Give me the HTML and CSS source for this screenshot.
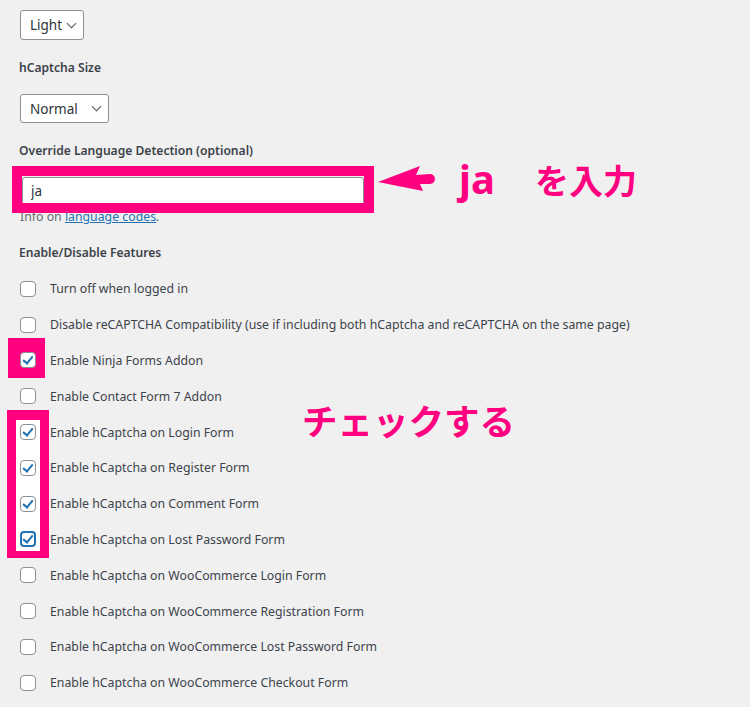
FILE: index.html
```html
<!DOCTYPE html>
<html lang="ja">

<head>
    <meta charset="UTF-8">
    <title>hCaptcha Settings</title>
    <link rel="stylesheet" href="styles.css">
</head>

<body>
    <div class="page">
        <!-- Theme -->
        <div class="field">
            <div class="select select-light">Light <span class="chev"></span></div>
        </div>

        <h3 class="label">hCaptcha Size</h3>
        <div class="field">
            <div class="select select-normal">Normal <span class="chev"></span></div>
        </div>

        <h3 class="label">Override Language Detection (optional)</h3>
        <div class="field lang">
            <input type="text" value="ja">
            <p class="desc">Info on <a href="#">language codes</a>.</p>
        </div>

        <h3 class="label">Enable/Disable Features</h3>
        <ul class="features">
            <li><span class="cb"></span>Turn off when logged in</li>
            <li><span class="cb"></span>Disable reCAPTCHA Compatibility (use if including both hCaptcha and reCAPTCHA on the same page)</li>
            <li><span class="cb checked"></span>Enable Ninja Forms Addon</li>
            <li><span class="cb"></span>Enable Contact Form 7 Addon</li>
            <li><span class="cb checked"></span>Enable hCaptcha on Login Form</li>
            <li><span class="cb checked"></span>Enable hCaptcha on Register Form</li>
            <li><span class="cb checked"></span>Enable hCaptcha on Comment Form</li>
            <li><span class="cb checked focus"></span>Enable hCaptcha on Lost Password Form</li>
            <li><span class="cb"></span>Enable hCaptcha on WooCommerce Login Form</li>
            <li><span class="cb"></span>Enable hCaptcha on WooCommerce Registration Form</li>
            <li><span class="cb"></span>Enable hCaptcha on WooCommerce Lost Password Form</li>
            <li><span class="cb"></span>Enable hCaptcha on WooCommerce Checkout Form</li>
        </ul>

        <!-- Annotations -->
        <div class="mark mark-input"></div>
        <svg class="arrow" width="62" height="30" viewBox="0 0 62 30">
            <path d="M2 18 L44 2 L40 11 L54 10 A5 5 0 0 1 54 20 L44 20 L47 27 Z" fill="#ff0080"/>
        </svg>
        <div class="note note-ja"><span class="latin">ja</span><span class="gap"></span>を入力</div>
        <div class="mark mark-ninja"></div>
        <div class="mark mark-forms"></div>
        <div class="note note-check">チェックする</div>
    </div>
</body>

</html>
```

FILE: styles.css
```css
html,
body {
    margin: 0;
    padding: 0;
    background-color: #f0f0f1;
}

body {
    font-family: "Noto Sans", "Open Sans", sans-serif;
    font-size: 12.3px;
    color: #3c434a;
}

.page {
    position: relative;
    padding: 10px 20px 0 20px;
    height: 697px;
    overflow: hidden;
}

.field {
    margin: 0;
}

.select {
    display: inline-flex;
    align-items: center;
    box-sizing: border-box;
    height: 30px;
    padding: 0 8px 0 9px;
    background: #fff;
    border: 1px solid #8c8f94;
    border-radius: 3px;
    font-size: 13.5px;
    color: #2c3338;
}

.select-light {
    width: 64px;
}

.select-normal {
    width: 89px;
    height: 29px;
    justify-content: space-between;
}

.chev {
    display: inline-block;
    width: 6px;
    height: 6px;
    border-right: 1.5px solid #50575e;
    border-bottom: 1.5px solid #50575e;
    transform: rotate(45deg);
    margin: -4px 0 0 6px;
}

.label {
    margin: 0;
    padding: 0;
    font-size: 12.1px;
    font-weight: 600;
    color: #3c434a;
    line-height: 18px;
    margin-left: -1px;
}

.field:first-child {
    margin-bottom: 19px;
}

.label + .field {
    margin-top: 17px;
}

.label:nth-of-type(2) {
    margin-top: 19px;
}

.lang {
    margin-top: 17px !important;
}

.lang input {
    display: block;
    box-sizing: border-box;
    width: 342px;
    height: 28px;
    margin: 0 0 0 2px;
    padding: 0 8px;
    border: 1px solid #8c8f94;
    border-radius: 3px;
    background: #fff;
    font-family: inherit;
    font-size: 13.5px;
    color: #2c3338;
}

.desc {
    margin: 3px 0 0 0;
    line-height: 18px;
    color: #646970;
}

.desc a {
    color: #2271b1;
}

.label:nth-of-type(3) {
    margin-top: 18px;
}

.features {
    list-style: none;
    margin: 9px 0 0 0;
    padding: 0;
}

.features li {
    display: flex;
    align-items: center;
    height: 35.8px;
}

.cb {
    box-sizing: border-box;
    width: 16px;
    height: 16px;
    margin: 0 14px 0 0;
    border: 1px solid #8c8f94;
    border-radius: 4px;
    background: #fff;
    position: relative;
    flex: none;
    z-index: 2;
}

.cb.checked::after {
    content: "";
    position: absolute;
    left: 4px;
    top: 1px;
    width: 4px;
    height: 8px;
    border-right: 2px solid #2271b1;
    border-bottom: 2px solid #2271b1;
    transform: rotate(40deg);
}

.cb.focus {
    border: 2px solid #2271b1;
}

.cb.focus::after {
    left: 3px;
    top: 0;
}

/* Pink annotations */
.mark {
    position: absolute;
    box-sizing: border-box;
    border: 10px solid #ff0080;
}

.mark-input {
    left: 12px;
    top: 166px;
    width: 362px;
    height: 47px;
}

.mark-ninja {
    left: 8px;
    top: 338px;
    width: 37px;
    height: 40px;
    border: none;
    background: #ff0080;
}

.mark-forms {
    left: 7px;
    top: 410px;
    width: 42px;
    height: 148px;
    border-width: 10px 9px 7px 9px;
    background: #fff;
}

.arrow {
    position: absolute;
    left: 376px;
    top: 164px;
}

.note {
    position: absolute;
    color: #ff0080;
    font-family: "Noto Sans CJK JP", "Noto Sans", sans-serif;
    font-weight: 700;
    white-space: nowrap;
}

.note-ja {
    left: 459px;
    top: 157px;
    font-size: 34px;
    line-height: 44px;
}

.latin {
    font-family: "Noto Sans", sans-serif;
    font-size: 40px;
}

.gap {
    display: inline-block;
    width: 40px;
}

.note-check {
    left: 302px;
    top: 397px;
    font-size: 35.5px;
    line-height: 46px;
}
```
